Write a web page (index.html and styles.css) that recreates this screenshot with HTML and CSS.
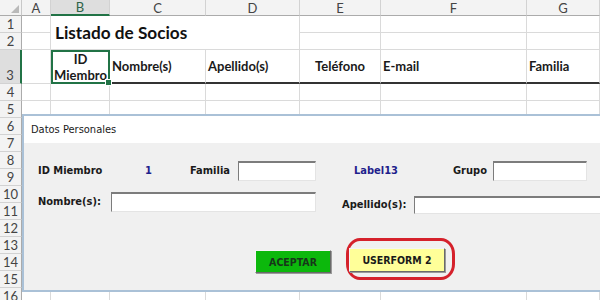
FILE: index.html
```html
<!DOCTYPE html>
<html lang="es">
  <head>
    <meta charset="UTF-8" />
    <title>Listado de Socios</title>
    <link rel="stylesheet" href="styles.css">
  </head>

  <body>
    <section class="sheet">
      <div class="corner"></div>
      <div class="colhead">A</div>
      <div class="colhead active">B</div>
      <div class="colhead">C</div>
      <div class="colhead">D</div>
      <div class="colhead">E</div>
      <div class="colhead">F</div>
      <div class="colhead">G</div>

      <div class="rowhead">1</div>
      <div class="cell"></div>
      <div class="cell title">Listado de Socios</div>
      <div class="cell"></div>
      <div class="cell"></div>
      <div class="cell"></div>

      <div class="rowhead">2</div>
      <div class="cell"></div>
      <div class="cell"></div>
      <div class="cell"></div>
      <div class="cell"></div>

      <div class="rowhead active">3</div>
      <div class="cell"></div>
      <div class="cell field center selected">ID<br>Miembro</div>
      <div class="cell field">Nombre(s)</div>
      <div class="cell field">Apellido(s)</div>
      <div class="cell field center">Teléfono</div>
      <div class="cell field">E-mail</div>
      <div class="cell field">Familia</div>

      <div class="rowhead">4</div>
      <div class="cell"></div><div class="cell"></div><div class="cell"></div><div class="cell"></div>
      <div class="cell"></div><div class="cell"></div><div class="cell"></div>

      <div class="rowhead">5</div>
      <div class="cell"></div><div class="cell"></div><div class="cell"></div><div class="cell"></div>
      <div class="cell"></div><div class="cell"></div><div class="cell"></div>

      <div class="rowhead">6</div><div class="cell wide"></div>
      <div class="rowhead">7</div><div class="cell wide"></div>
      <div class="rowhead">8</div><div class="cell wide"></div>
      <div class="rowhead">9</div><div class="cell wide"></div>
      <div class="rowhead">10</div><div class="cell wide"></div>
      <div class="rowhead">11</div><div class="cell wide"></div>
      <div class="rowhead">12</div><div class="cell wide"></div>
      <div class="rowhead">13</div><div class="cell wide"></div>
      <div class="rowhead">14</div><div class="cell wide"></div>
      <div class="rowhead">15</div><div class="cell wide"></div>

      <div class="rowhead">16</div>
      <div class="cell"></div><div class="cell"></div><div class="cell"></div><div class="cell"></div>
      <div class="cell"></div><div class="cell"></div><div class="cell"></div>
    </section>

    <div class="dialog">
      <div class="dialog-title">Datos Personales</div>
      <div class="dialog-body">
        <div class="form-row">
          <span class="lbl w-id">ID Miembro</span>
          <span class="val w-num">1</span>
          <span class="lbl w-fam">Familia</span>
          <input class="box w-fambox" type="text" />
          <span class="val w-label13">Label13</span>
          <span class="lbl w-grupo">Grupo</span>
          <input class="box w-grupobox" type="text" />
        </div>

        <div class="form-row second">
          <span class="lbl w-nombre">Nombre(s):</span>
          <input class="box w-nombrebox" type="text" />
          <span class="lbl w-apellido">Apellido(s):</span>
          <input class="box w-apellidobox" type="text" />
        </div>

        <div class="actions">
          <button class="btn ok">ACEPTAR</button>
          <span class="ring"><button class="btn alt">USERFORM 2</button></span>
        </div>
      </div>
    </div>
  </body>
</html>
```

FILE: styles.css
```css
html,
body {
  margin: 0;
  padding: 0;
  height: 100%;
}

body {
  position: relative;
  overflow: hidden;
  background: #fff;
  font-family: Lato, "Liberation Sans", sans-serif;
}

/* spreadsheet */
.sheet {
  display: grid;
  grid-template-columns: 22px 29px 59px 96px 94px 81px 146px 1fr;
  grid-template-rows: 16px 17px 17px 34px repeat(13, 17px);
}

.sheet > div {
  box-sizing: border-box;
}

.corner {
  position: relative;
  background: #f3f3f3;
  border-right: 1px solid #c8c8c8;
  border-bottom: 1px solid #ababab;
}

.corner::after {
  content: "";
  position: absolute;
  right: 2px;
  bottom: 2px;
  border-left: 8px solid transparent;
  border-bottom: 8px solid #b9b9b9;
}

.colhead {
  display: flex;
  align-items: center;
  justify-content: center;
  background: #f3f3f3;
  border-right: 1px solid #d2d2d2;
  border-bottom: 1px solid #ababab;
  color: #444;
  font-size: 13px;
}

.colhead.active {
  background: #dedede;
  border-bottom: 2px solid #217346;
  color: #2e6347;
}

.rowhead {
  display: flex;
  align-items: flex-end;
  justify-content: center;
  background: #f3f3f3;
  border-right: 1px solid #ababab;
  border-bottom: 1px solid #d2d2d2;
  color: #444;
  font-size: 13px;
  line-height: 16px;
}

.rowhead.active {
  background: #dedede;
  border-right: 2px solid #217346;
}

.cell {
  border-right: 1px solid #dadada;
  border-bottom: 1px solid #dadada;
}

.cell.wide {
  grid-column: span 7;
}

.title {
  grid-column: span 3;
  grid-row: span 2;
  display: flex;
  align-items: center;
  padding-left: 4px;
  font-size: 17.2px;
  font-weight: bold;
  color: #111;
}

.field {
  display: flex;
  align-items: center;
  padding-left: 2px;
  border-bottom: 2px solid #333;
  font-size: 13px;
  font-weight: bold;
  color: #1a1a1a;
  line-height: 16px;
}

.field.center {
  justify-content: center;
  text-align: center;
  padding-left: 0;
}

.selected {
  position: relative;
  border: 2px solid #217346;
}

.selected::after {
  content: "";
  position: absolute;
  right: -4px;
  bottom: -4px;
  width: 5px;
  height: 5px;
  background: #217346;
  border: 1px solid #fff;
}

/* user form */
.dialog {
  position: absolute;
  left: 22px;
  top: 114px;
  right: -40px;
  height: 178px;
  box-sizing: border-box;
  border: 2px solid #aac1d7;
  background: #f0f0f0;
  font-family: "DejaVu Sans Condensed", "DejaVu Sans", sans-serif;
  font-stretch: condensed;
  color: #1a1a1a;
}

.dialog-title {
  height: 27px;
  padding-left: 7px;
  background: #fff;
  font-size: 11px;
  line-height: 27px;
}

.dialog-body {
  padding: 18px 0 0 14px;
}

.form-row {
  display: flex;
  align-items: center;
  height: 20px;
}

.form-row.second {
  align-items: flex-start;
  margin-top: 11px;
  height: 22px;
}

.lbl {
  font-size: 11px;
  font-weight: bold;
  line-height: 20px;
}

.val {
  font-size: 11px;
  font-weight: bold;
  color: #1f1f8c;
  line-height: 20px;
}

.w-id { width: 107px; }
.w-num { width: 45px; }
.w-fam { width: 48px; }
.w-label13 { width: 99px; margin-left: 38px; }
.w-grupo { width: 40px; }
.w-nombre { width: 73px; }
.w-apellido { width: 72px; margin-left: 26px; margin-top: 3px; }

.box {
  box-sizing: border-box;
  height: 20px;
  margin: 0;
  padding: 0;
  background: #fff;
  border: 1px solid;
  border-top-width: 2px;
  border-color: #7c7c7c #e4e4e4 #e4e4e4 #7c7c7c;
}

.w-fambox { width: 78px; }
.w-grupobox { width: 94px; }
.w-nombrebox { width: 205px; }

.w-apellidobox {
  flex-grow: 1;
  height: 18px;
  margin-top: 4px;
}

.actions {
  display: flex;
  align-items: flex-start;
  margin-top: 24px;
}

.btn {
  box-sizing: border-box;
  height: 23px;
  padding: 0;
  border: 1px solid;
  border-color: #f4f4f4 #6a6a6a #6a6a6a #f4f4f4;
  box-shadow: 1px 1px 0 #9a9a9a;
  font-family: inherit;
  font-stretch: condensed;
  font-size: 10.5px;
  font-weight: bold;
  cursor: pointer;
}

.btn.ok {
  width: 76px;
  margin-left: 217px;
  margin-top: 12px;
  background: #0cb80c;
  color: #17361a;
}

.btn.alt {
  width: 96px;
  height: 24px;
  background: #ffff99;
  color: #1a1a1a;
}

.ring {
  display: flex;
  margin-left: 15px;
  padding: 7px 7px 5px 0;
  border: 3px solid #d5212b;
  border-radius: 14px / 16px;
}
```
